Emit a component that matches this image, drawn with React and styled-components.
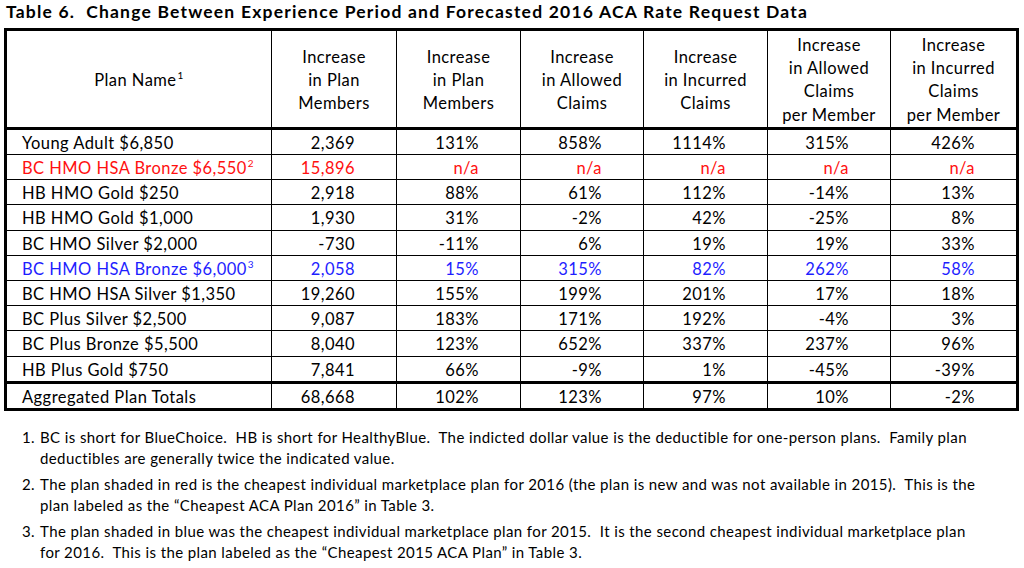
import React from 'react';
import styled, { createGlobalStyle } from 'styled-components';

const GlobalStyle = createGlobalStyle`
  body {
    margin: 0;
    background: #fff;
    font-family: Lato, "Liberation Sans", sans-serif;
    color: #000;
  }
`

const Page = styled.div`
  width: 1024px;
  height: 568px;
  padding: 0 0 0 4px;
  box-sizing: border-box;
  overflow: hidden;
`

const Title = styled.h1`
  margin: 1px 0 5px 2px;
  font-size: 17.5px;
  letter-spacing: 1.2px;
  line-height: 22px;
  font-weight: 700;
  white-space: pre;
`

const Table = styled.table`
  width: 1012px;
  table-layout: fixed;
  border-collapse: collapse;
  border: 3px solid #000;
  font-size: 16.5px;
  letter-spacing: 0.45px;
`

const HeadCell = styled.th`
  border: 1px solid #000;
  border-bottom: 3px solid #000;
  height: 92px;
  padding: 3px 0 0;
  font-weight: 400;
  line-height: 23.2px;
  text-align: center;
  vertical-align: middle;
`

const Row = styled.tr`
  color: ${p => p.$tone === 'red' ? '#ff1010' : p.$tone === 'blue' ? '#1e1eff' : '#000'};
  & > td {
    border-top: ${p => p.$total ? '3px' : '1px'} solid #000;
  }
`

const Cell = styled.td`
  border: 1px solid #000;
  height: 22.2px;
  padding: 2px ${p => p.$name ? '0' : '41px'} 0 ${p => p.$name ? '15px' : '0'};
  text-align: ${p => p.$name ? 'left' : 'right'};
  line-height: 22px;
  white-space: nowrap;
`

const Sup = styled.sup`
  font-size: 10px;
  line-height: 0;
  vertical-align: 7px;
  margin-left: 1px;
`

const Notes = styled.div`
  display: flex;
  flex-direction: column;
  gap: 5px;
  margin-top: 16px;
  padding-left: 18px;
  font-size: 15px;
  letter-spacing: 0.4px;
  line-height: 21px;
`

const Note = styled.div`
  display: flex;
`

const NoteNum = styled.span`
  flex: 0 0 18px;
`

const NoteText = styled.span`
  white-space: pre;
`

const cols = [266, 125, 124, 123, 124, 123, 127];

const headers = [
  ['Increase', 'in Plan', 'Members'],
  ['Increase', 'in Plan', 'Members'],
  ['Increase', 'in Allowed', 'Claims'],
  ['Increase', 'in Incurred', 'Claims'],
  ['Increase', 'in Allowed', 'Claims', 'per Member'],
  ['Increase', 'in Incurred', 'Claims', 'per Member'],
];

const rows = [
  { name: 'Young Adult $6,850', vals: ['2,369', '131%', '858%', '1114%', '315%', '426%'] },
  { name: 'BC HMO HSA Bronze $6,550', note: '2', tone: 'red', vals: ['15,896', 'n/a', 'n/a', 'n/a', 'n/a', 'n/a'] },
  { name: 'HB HMO Gold $250', vals: ['2,918', '88%', '61%', '112%', '-14%', '13%'] },
  { name: 'HB HMO Gold $1,000', vals: ['1,930', '31%', '-2%', '42%', '-25%', '8%'] },
  { name: 'BC HMO Silver $2,000', vals: ['-730', '-11%', '6%', '19%', '19%', '33%'] },
  { name: 'BC HMO HSA Bronze $6,000', note: '3', tone: 'blue', vals: ['2,058', '15%', '315%', '82%', '262%', '58%'] },
  { name: 'BC HMO HSA Silver $1,350', vals: ['19,260', '155%', '199%', '201%', '17%', '18%'] },
  { name: 'BC Plus Silver $2,500', vals: ['9,087', '183%', '171%', '192%', '-4%', '3%'] },
  { name: 'BC Plus Bronze $5,500', vals: ['8,040', '123%', '652%', '337%', '237%', '96%'] },
  { name: 'HB Plus Gold $750', vals: ['7,841', '66%', '-9%', '1%', '-45%', '-39%'] },
  { name: 'Aggregated Plan Totals', total: true, vals: ['68,668', '102%', '123%', '97%', '10%', '-2%'] },
];

const notes = [
  ['BC is short for BlueChoice.  HB is short for HealthyBlue.  The indicted dollar value is the deductible for one-person plans.  Family plan',
    'deductibles are generally twice the indicated value.'],
  ['The plan shaded in red is the cheapest individual marketplace plan for 2016 (the plan is new and was not available in 2015).  This is the',
    'plan labeled as the \u201cCheapest ACA Plan 2016\u201d in Table 3.'],
  ['The plan shaded in blue was the cheapest individual marketplace plan for 2015.  It is the second cheapest individual marketplace plan',
    'for 2016.  This is the plan labeled as the \u201cCheapest 2015 ACA Plan\u201d in Table 3.'],
];

function App() {
  return (
    <Page>
      <GlobalStyle />
      <Title>{'Table 6.  Change Between Experience Period and Forecasted 2016 ACA Rate Request Data'}</Title>
      <Table>
        <colgroup>
          {cols.map((w, i) => <col key={i} style={{ width: w }} />)}
        </colgroup>
        <thead>
          <tr>
            <HeadCell>Plan Name<Sup>1</Sup></HeadCell>
            {headers.map((lines, i) => (
              <HeadCell key={i}>
                {lines.map((l, j) => <div key={j}>{l}</div>)}
              </HeadCell>
            ))}
          </tr>
        </thead>
        <tbody>
          {rows.map(r => (
            <Row key={r.name} $tone={r.tone} $total={r.total}>
              <Cell $name>{r.name}{r.note && <Sup>{r.note}</Sup>}</Cell>
              {r.vals.map((v, i) => <Cell key={i}>{v}</Cell>)}
            </Row>
          ))}
        </tbody>
      </Table>
      <Notes>
        {notes.map((n, i) => (
          <Note key={i}>
            <NoteNum>{i + 1}.</NoteNum>
            <NoteText>{n[0]}{'\n'}{n[1]}</NoteText>
          </Note>
        ))}
      </Notes>
    </Page>
  );
}

export default App;
